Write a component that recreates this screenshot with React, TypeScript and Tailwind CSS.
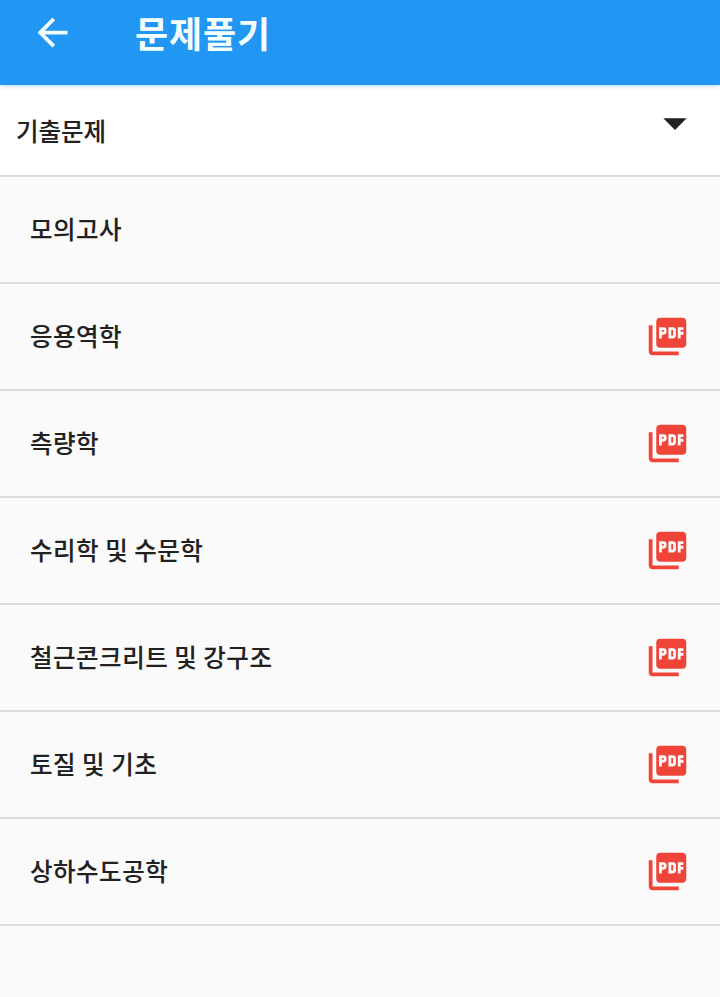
import React from 'react'
import { MdArrowBack, MdArrowDropDown, MdPictureAsPdf } from 'react-icons/md'

interface Subject {
  name: string
  hasPdf: boolean
}

const subjects: Subject[] = [
  { name: '모의고사', hasPdf: false },
  { name: '응용역학', hasPdf: true },
  { name: '측량학', hasPdf: true },
  { name: '수리학 및 수문학', hasPdf: true },
  { name: '철근콘크리트 및 강구조', hasPdf: true },
  { name: '토질 및 기초', hasPdf: true },
  { name: '상하수도공학', hasPdf: true },
]

export default function App() {
  return (
    <div className="min-h-screen bg-[#fafafa] font-['Noto_Sans_CJK_KR',sans-serif] text-[#212121]">
      {/* App bar */}
      <header className="relative flex h-[85px] items-center bg-[#2196f3] pb-5 pl-[30px] text-[#f4feff] shadow-[0_1px_5px_rgba(33,150,243,0.35)]">
        <button aria-label="뒤로">
          <MdArrowBack className="h-[45px] w-[45px]" />
        </button>
        <h1 className="ml-[60px] pb-0.5 text-[36px] leading-none font-bold tracking-[0.9px]">문제풀기</h1>
      </header>

      {/* Category select */}
      <div className="flex h-[92px] items-center justify-between border-b-2 border-[#dcdcdc] bg-white pr-[17.5px] pl-4">
        <span className="pt-0.5 text-[24.5px] leading-8 font-medium [-webkit-text-stroke:0.1px_#212121]">기출문제</span>
        <MdArrowDropDown className="mb-[14px] h-[56px] w-[56px]" />
      </div>

      <ul>
        {subjects.map((subject) => (
          <li
            key={subject.name}
            className="flex h-[107px] items-center justify-between border-b-2 border-[#dcdcdc] pr-[30px] pl-[30px]"
          >
            <span className="pb-0.5 text-[24.5px] leading-8 font-medium tracking-[0.5px] [-webkit-text-stroke:0.1px_#212121]">
              {subject.name}
            </span>
            {subject.hasPdf && <MdPictureAsPdf className="h-[45px] w-[45px] text-[#f04438]" />}
          </li>
        ))}
      </ul>
    </div>
  )
}
